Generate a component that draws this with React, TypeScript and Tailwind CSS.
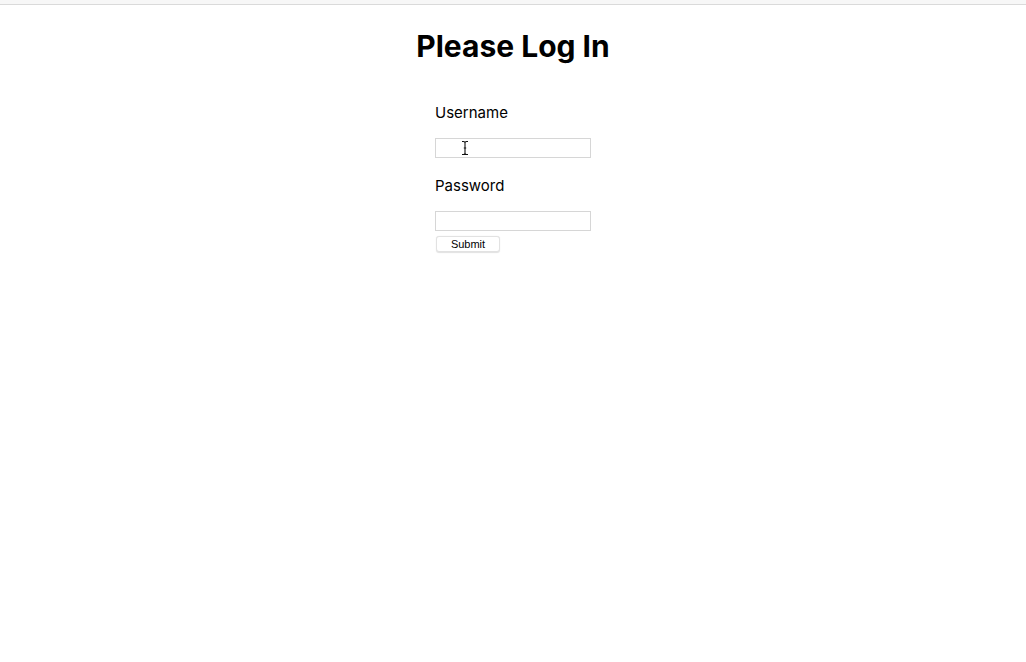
import React from "react";

export default function App() {
  return (
    <div className="min-h-[662px] w-full bg-white text-black" style={{ fontFamily: "Inter, 'Noto Sans', sans-serif" }}>
      <div className="h-[5px] w-full bg-[#f7f7f7] border-b border-[#dadada]" />
      <div className="flex flex-col items-center">
        <h1 className="mt-[23px] text-[30px] leading-[36px] font-bold">Please Log In</h1>
        <form className="mt-[38px] flex w-[156px] flex-col" onSubmit={(e) => e.preventDefault()}>
          <label className="flex flex-col">
            <p className="text-[15px] leading-[19px] pt-px">Username</p>
            <div className="relative mt-[16px]">
              <input type="text" className="block h-[20px] w-[156px] border border-[#d6d6d6] bg-white outline-none" />
              <svg className="pointer-events-none absolute left-[26px] top-[2px]" width="8" height="16" viewBox="0 0 8 16">
                <path d="M1 1.5 L2.5 1.5 Q4 1.5 4 3 L4 13 Q4 14.5 2.5 14.5 L1 14.5 M7 1.5 L5.5 1.5 Q4 1.5 4 3 M4 13 Q4 14.5 5.5 14.5 L7 14.5 M2.8 8 L5.2 8" stroke="#111" strokeWidth="1.1" fill="none" />
              </svg>
            </div>
          </label>
          <label className="mt-[17px] flex flex-col">
            <p className="text-[15px] leading-[19px] pt-px">Password</p>
            <input type="password" className="mt-[16px] block h-[20px] w-[156px] border border-[#d6d6d6] bg-white outline-none" />
          </label>
          <div className="mt-[5px] ml-px flex">
            <button
              type="submit"
              className="flex h-[16px] w-[64px] items-center justify-center rounded-[3px] border border-[#e2e2e2] bg-white text-[11px] leading-[14px] shadow-[0_0.5px_1px_rgba(0,0,0,0.12)]"
              style={{ fontFamily: "'Liberation Sans', Arial, sans-serif" }}
            >
              Submit
            </button>
          </div>
        </form>
      </div>
    </div>
  );
}
